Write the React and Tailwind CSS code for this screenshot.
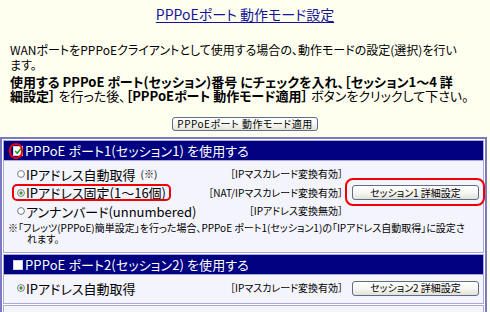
import React from "react";

const JP = "font-['Noto_Sans_CJK_JP',sans-serif] [font-feature-settings:'palt']";

function Radio({ checked }) {
  return (
    <svg width="8" height="8" viewBox="0 0 8 8" className="shrink-0">
      <circle cx="4" cy="4" r="3.4" fill="white" stroke="#6a6a7a" strokeWidth="0.9" />
      {checked && <circle cx="4" cy="4" r="1.7" fill="#2f9e2f" />}
    </svg>
  );
}

function Check({ checked }) {
  return (
    <svg width="10" height="10" viewBox="0 0 10 10" className="shrink-0">
      <rect x="0.5" y="0.5" width="9" height="9" fill="white" stroke="#d0d0e8" strokeWidth="1" />
      {checked && <path d="M2.2 5 L4.2 7.2 L8 2.6" fill="none" stroke="#1f9a1f" strokeWidth="1.6" />}
    </svg>
  );
}

function Btn({ children, className = "" }) {
  return (
    <button
      className={
        "flex items-center justify-center rounded-[3px] border border-[#5d6f86] bg-linear-to-b from-white via-[#f7f7f3] to-[#e2e2da] text-[10px] leading-none text-black " +
        className
      }
    >
      {children}
    </button>
  );
}

function Header({ checked, children }) {
  return (
    <div className="flex h-[21px] items-center border border-[#a9a9d6] bg-[#000080] pl-[9px] text-[13px] leading-none tracking-[0.1px] text-white">
      <Check checked={checked} />
      <span className="ml-[2px] whitespace-nowrap">{children}</span>
    </div>
  );
}

function Row({ checked, label, extra, bracket, button, redLabel, redButton, className = "" }) {
  return (
    <div className={"flex items-center " + className}>
      <div className="flex flex-1 items-center">
        <span className="relative flex items-center">
          {redLabel && (
            <span className="pointer-events-none absolute -left-[5px] -right-[5px] -top-[2px] -bottom-[2px] rounded-[5px] border-2 border-[#f00000]" />
          )}
          <Radio checked={checked} />
          <span className="ml-[1px] whitespace-nowrap text-[13px] leading-none">{label}</span>
          {extra && <span className="ml-[5px] whitespace-nowrap text-[10px] leading-none">{extra}</span>}
        </span>
      </div>
      <span className="whitespace-nowrap text-[10px] leading-none">{bracket}</span>
      <div className="relative ml-[9px] flex w-[127px] shrink-0 items-center">
        {redButton && (
          <span className="pointer-events-none absolute -left-[7px] -right-[6px] -top-[7px] -bottom-[6px] rounded-[8px] border-2 border-[#f00000]" />
        )}
        {button && <Btn className="h-[15px] w-[127px]">{button}</Btn>}
      </div>
    </div>
  );
}

export default function App() {
  return (
    <div className={"h-[312px] w-[490px] overflow-hidden bg-[#fffff0] leading-none text-black " + JP}>
      <div className="pt-[6px] text-center text-[14px] leading-[16px]">
        <span className="text-[#14149a] underline underline-offset-2">PPPoEポート 動作モード設定</span>
      </div>

      <p className="mt-[20px] whitespace-nowrap pl-[10px] text-[12px] leading-[15px]">
        WANポートをPPPoEクライアントとして使用する場合の、動作モードの設定(選択)を行い
        <br />
        ます。
      </p>

      <p className="mt-[3px] whitespace-nowrap pl-[10px] text-[13px] leading-[14px]">
        <b>使用する PPPoE ポート(セッション)番号 にチェックを入れ、［セッション1～4 詳</b>
        <br />
        <b>細設定］</b> を行った後、<b>［PPPoEポート 動作モード適用］</b> ボタンをクリックして下さい。
      </p>

      <div className="mt-[14px] flex justify-center">
        <Btn className="h-[14px] w-[146px] tracking-[0.5px]">PPPoEポート 動作モード適用</Btn>
      </div>

      <div className="mt-[6px] w-[487px] border-2 border-[#7a7ac4] bg-white p-px">
        <div className="relative">
          <span className="pointer-events-none absolute left-[6px] top-[3px] h-[16px] w-[14px] rounded-full border-2 border-[#f00000]" />
          <Header checked>PPPoE ポート1(セッション1) を使用する</Header>
        </div>
        <div className="border border-t-0 border-[#a9a9d6] bg-[#f4f4fc] pb-[8px] pl-[13px] pr-[4px] pt-[4px]">
          <Row label="IPアドレス自動取得" extra="(※)" bracket="［IPマスカレード変換有効］" className="h-[18px]" />
          <Row
            checked
            redLabel
            redButton
            label="IPアドレス固定(1～16個)"
            bracket="［NAT/IPマスカレード変換有効］"
            button="セッション1 詳細設定"
            className="h-[19px]"
          />
          <Row label="アンナンバード(unnumbered)" bracket="［IPアドレス変換無効］" className="h-[18px]" />
          <div className="-ml-[9px] mt-[2px] whitespace-nowrap text-[10px] leading-[11px]">
            ※「フレッツ(PPPoE)簡単設定」を行った場合、PPPoE ポート1(セッション1)の「IPアドレス自動取得」に設定さ
            <div className="pl-[19px]">れます。</div>
          </div>
        </div>

        <div className="mt-px">
          <Header>PPPoE ポート2(セッション2) を使用する</Header>
        </div>
        <div className="border border-t-0 border-[#a9a9d6] bg-[#f4f4fc] pb-[6px] pl-[13px] pr-[4px] pt-[4px]">
          <Row
            checked
            label="IPアドレス自動取得"
            bracket="［IPマスカレード変換有効］"
            button="セッション2 詳細設定"
            className="h-[18px]"
          />
        </div>

        <div className="mt-px h-[40px] border border-[#a9a9d6] bg-[#f4f4fc]" />
      </div>
    </div>
  );
}
